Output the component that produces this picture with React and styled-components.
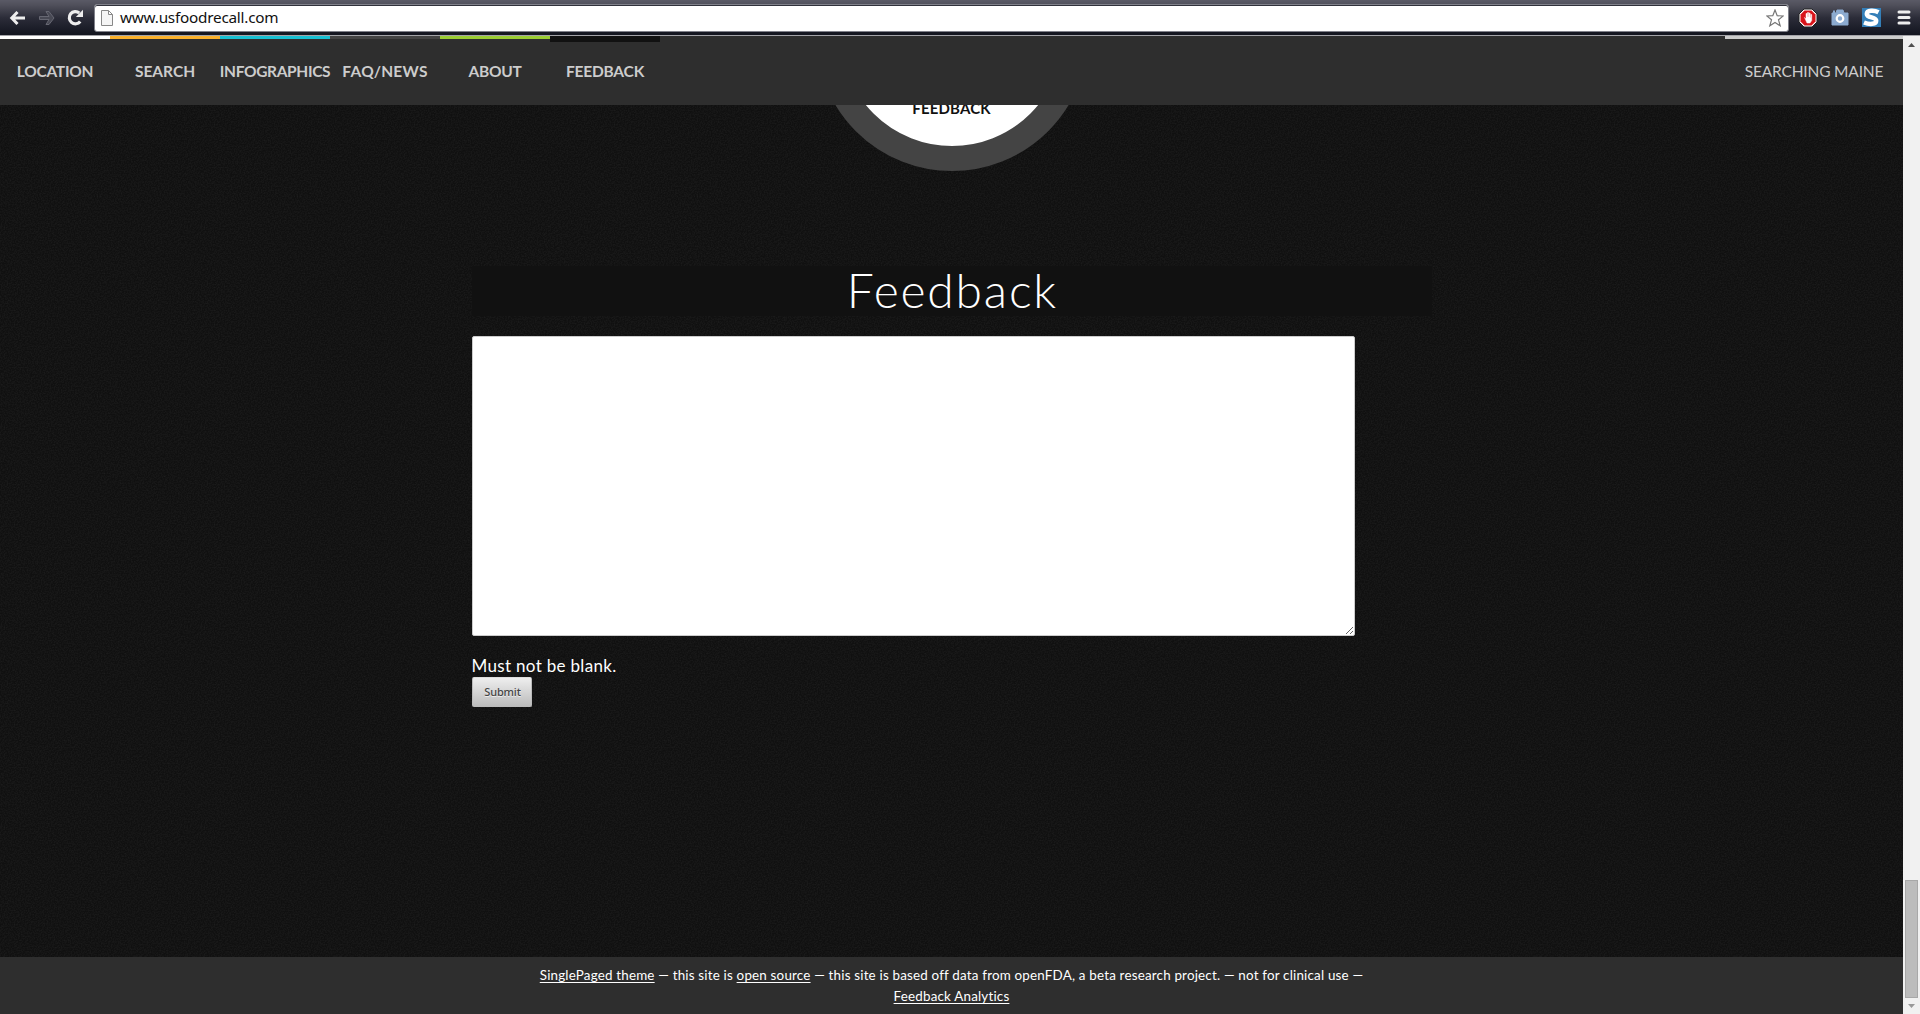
import React from "react";
import styled, { createGlobalStyle } from "styled-components";

const noise =
  "url(\"data:image/svg+xml,%3Csvg xmlns='http://www.w3.org/2000/svg' width='200' height='200'%3E%3Cfilter id='n'%3E%3CfeTurbulence type='fractalNoise' baseFrequency='.7' numOctaves='2' stitchTiles='stitch'/%3E%3CfeColorMatrix values='0 0 0 0 1 0 0 0 0 1 0 0 0 0 1 .1 0 0 0 -.036'/%3E%3C/filter%3E%3Crect width='200' height='200' filter='url(%23n)'/%3E%3C/svg%3E\")";

const Global = createGlobalStyle`
  * { box-sizing: border-box; }
  body { margin: 0; overflow: hidden; background: #111; }
`;
const Browser = styled.div`
  height: 1014px;
  display: flex;
  flex-direction: column;
  font-family: Lato, "Open Sans", sans-serif;
  color: #fff;
`;
const Toolbar = styled.header`
  height: 36px;
  flex: none;
  display: flex;
  align-items: flex-start;
  background: linear-gradient(#5a5a66 0, #50505b 5px, #2b2c38 18px, #141620 34px);
  border-bottom: 1px solid #a3a3a8;
`;
const NavButtons = styled.div`
  width: 94px;
  height: 35px;
  padding-left: 9px;
  display: flex;
  align-items: center;
  gap: 12px;
  svg { display: block; }
`;
const AddressBar = styled.div`
  width: 1695px;
  height: 28px;
  margin-top: 4px;
  padding: 0 4px 0 6px;
  display: flex;
  align-items: center;
  background: #fff;
  border: 1px solid #80818a;
  border-radius: 3px;
  box-shadow: inset 0 1px 0 #30313b;
`;
const Address = styled.span`
  flex: 1;
  margin-left: 7px;
  padding-bottom: 2px;
  color: #111;
  font: 15.3px/24px "Noto Sans", sans-serif;
  letter-spacing: -0.23px;
`;
const Extensions = styled.div`
  height: 35px;
  padding-left: 9px;
  display: flex;
  align-items: center;
  gap: 13px;
  svg { display: block; flex: none; }
  svg:last-child { margin-left: 3px; }
`;
const Viewport = styled.div`
  flex: 1;
  min-height: 0;
  display: flex;
`;
const Page = styled.div`
  width: 1903px;
  display: flex;
  flex-direction: column;
  background: ${noise} #101010;
`;
const Menu = styled.nav`
  height: 69px;
  flex: none;
  display: flex;
  background: #2e2e2e;
`;
const MenuItem = styled.a`
  width: ${(p) => p.$width || 110}px;
  display: flex;
  justify-content: center;
  border-top: ${(p) => p.$bar || 3}px solid ${(p) => p.$accent};
  padding-top: ${(p) => 23 - (p.$bar || 3)}px;
  margin-left: ${(p) => (p.$right ? "auto" : 0)};
  color: #ccc;
  font-size: 15.5px;
  line-height: 24px;
  font-weight: ${(p) => (p.$right ? 400 : 700)};
  letter-spacing: ${(p) => p.$spacing || 0}px;
  white-space: nowrap;
`;
const Content = styled.main`
  flex: 1;
  display: flex;
  flex-direction: column;
  align-items: center;
`;
const CircleWindow = styled.div`
  width: 272px;
  height: 66px;
  overflow: hidden;
  display: flex;
  align-items: flex-end;
`;
const Circle = styled.div`
  width: 272px;
  height: 272px;
  flex: none;
  border: 25px solid #444;
  border-radius: 50%;
  background: #fff;
  color: #111;
  display: flex;
  align-items: flex-end;
  justify-content: center;
  padding-bottom: 26px;
  font: 700 15px/24px Lato, sans-serif;
  letter-spacing: 0.15px;
`;
const Section = styled.section`
  width: 960px;
  margin-top: 95px;
  display: flex;
  flex-direction: column;
  align-items: flex-start;
`;
const Title = styled.h1`
  width: 960px;
  height: 50px;
  margin: 0 0 20px;
  background: #111;
  text-align: center;
  text-indent: 1.8px;
  font: 300 48px/48px Lato, sans-serif;
  letter-spacing: 1.8px;
`;
const Comment = styled.textarea`
  width: 883px;
  height: 300px;
  margin: 0;
  border: 1px solid #ccc;
  border-radius: 2px;
  background: #fff;
  resize: both;
  outline: 0;
`;
const Hint = styled.p`
  height: 23px;
  margin: 18px 0 0;
  font-size: 17px;
  line-height: 24px;
  letter-spacing: 0.32px;
`;
const Submit = styled.button`
  width: 60px;
  height: 30px;
  padding: 0 0 0 2px;
  border: 1px solid #bbb;
  border-top-color: #ddd;
  border-radius: 2px;
  background: linear-gradient(#eee, #bcbcbc);
  color: #444;
  text-shadow: 0 1px #eee;
  font: 500 11px/16px "Noto Sans", sans-serif;
  letter-spacing: -0.15px;
`;
const Footer = styled.footer`
  height: 57px;
  flex: none;
  padding-top: 8px;
  background: #2e2e2e;
  text-align: center;
  font-size: 13.4px;
  line-height: 21px;
  letter-spacing: 0.19px;
  white-space: nowrap;
`;
const FooterLine = styled.div`
  height: 21px;
`;
const Link = styled.a`
  text-decoration: underline;
  text-underline-offset: 2px;
`;
const Scrollbar = styled.aside`
  width: 17px;
  display: flex;
  flex-direction: column;
  align-items: center;
  background: #f1f1f1;
`;
const Arrow = styled.svg`
  width: 7px;
  height: 4px;
  margin: ${(p) => p.$margin};
  fill: ${(p) => p.$color};
`;
const Thumb = styled.div`
  width: 13px;
  height: 118px;
  margin-top: auto;
  background: #bcbcbc;
  border: 1px solid #a8a8a8;
`;

export default function App() {
  return (
    <Browser>
      <Global />
      <Toolbar>
        <NavButtons>
          <svg width="17" height="16" viewBox="0 0 17 16" fill="none" stroke="#eee" strokeWidth="3">
            <path d="M8.500 2 2.800 8l5.700 6M3 8h13" />
          </svg>
          <svg width="17" height="16" viewBox="0 0 16 16" fill="#484954" stroke="#666772">
            <path d="M7.500 1.500h3l5 6.500-5 6.500h-3l3-5H1v-3h9.500z" />
          </svg>
          <svg width="17" height="17" viewBox="0 0 17 17">
            <path d="M13.200 12.500A6.100 6.100 0 1 1 12.300 4" fill="none" stroke="#eee" strokeWidth="3.200" />
            <path d="M16 .8V8H8.800z" fill="#eee" />
          </svg>
        </NavButtons>
        <AddressBar>
          <svg width="12" height="16" viewBox="0 0 12 16" fill="#f5f5f5" stroke="#888">
            <path d="M.5.5h7l4 4v11H.5zM7.500.5v4h4" />
          </svg>
          <Address>www.usfoodrecall.com</Address>
          <svg width="18" height="18" viewBox="0 0 18 18" fill="#fff" stroke="#777" strokeWidth="1.200">
            <path d="m9 1 2.200 5.700 6 .3-4.700 3.800 1.700 6L9 13.400l-5.200 3.400 1.700-6L.8 7l6-.3z" />
          </svg>
        </AddressBar>
        <Extensions>
          <svg width="20" height="20" viewBox="0 0 20 20">
            <path d="M6 1h8l5 5v8l-5 5H6l-5-5V6z" fill="#fff" stroke="#222" />
            <path d="M6.500 2.500h7l4 4v7l-4 4h-7l-4-4v-7z" fill="#d9151b" />
            <path d="M6.500 9.500 8 11V5.500h1V9h.5V4.500h1V9h.6V5h1v4.500h.6V6.500h1v6L12 15H9z" fill="#fff" stroke="#fff" strokeWidth=".5" />
          </svg>
          <svg width="18" height="17" viewBox="0 0 18 17">
            <path d="M1 4h4l1-3h6l1 3h4v12H1z" fill="#8cabd0" stroke="#8cabd0" strokeLinejoin="round" />
            <path d="M2 1.500h2V4H2z" fill="#8cabd0" />
            <circle cx="9" cy="9.500" r="3.300" fill="#8cabd0" stroke="#fff" strokeWidth="2.200" />
          </svg>
          <svg width="19" height="19" viewBox="0 0 19 19">
            <path fill="#347fb8" d="M0 0h19v19H0z" />
            <path d="M16.500 4.300C12.500 2.200 4.800 1.900 4.800 5.900c0 4.400 9.400 2.700 9.400 6.900 0 3.700-6.700 3.900-12.200 1.700" fill="none" stroke="#fff" strokeWidth="4.500" />
          </svg>
          <svg width="14" height="15" viewBox="0 0 14 15" stroke="#eee" strokeWidth="3" strokeLinecap="round">
            <path d="M2 2h10M2 7.500h10M2 13h10" />
          </svg>
        </Extensions>
      </Toolbar>
      <Viewport>
        <Page>
          <Menu>
            <MenuItem $accent="#fff" $spacing={-0.25}>LOCATION</MenuItem>
            <MenuItem $accent="#fbb12b">SEARCH</MenuItem>
            <MenuItem $accent="#16bfd2" $spacing={-0.35}>INFOGRAPHICS</MenuItem>
            <MenuItem $accent="#444" $spacing={0.25}>FAQ/NEWS</MenuItem>
            <MenuItem $accent="#9acd32" $spacing={-0.3}>ABOUT</MenuItem>
            <MenuItem $accent="#111" $bar={6} $spacing={-0.2}>FEEDBACK</MenuItem>
            <MenuItem $accent="#ccc" $width={178} $right $spacing={-0.17}>SEARCHING MAINE</MenuItem>
          </Menu>
          <Content>
            <CircleWindow>
              <Circle>FEEDBACK</Circle>
            </CircleWindow>
            <Section>
              <Title>Feedback</Title>
              <Comment />
              <Hint>Must not be blank.</Hint>
              <Submit>Submit</Submit>
            </Section>
          </Content>
          <Footer>
            <FooterLine>
              <Link>SinglePaged theme</Link> — this site is <Link>open source</Link> — this site is based off data from openFDA, a beta research project. — not for clinical use —
            </FooterLine>
            <FooterLine>
              <Link>Feedback Analytics</Link>
            </FooterLine>
          </Footer>
        </Page>
        <Scrollbar>
          <Arrow $margin="7px 0 0" $color="#505050" viewBox="0 0 7 4"><path d="M0 4 3.500 0 7 4z" /></Arrow>
          <Thumb />
          <Arrow $margin="6px 0 6px" $color="#999" viewBox="0 0 7 4"><path d="M0 0h7L3.500 4z" /></Arrow>
        </Scrollbar>
      </Viewport>
    </Browser>
  );
}
